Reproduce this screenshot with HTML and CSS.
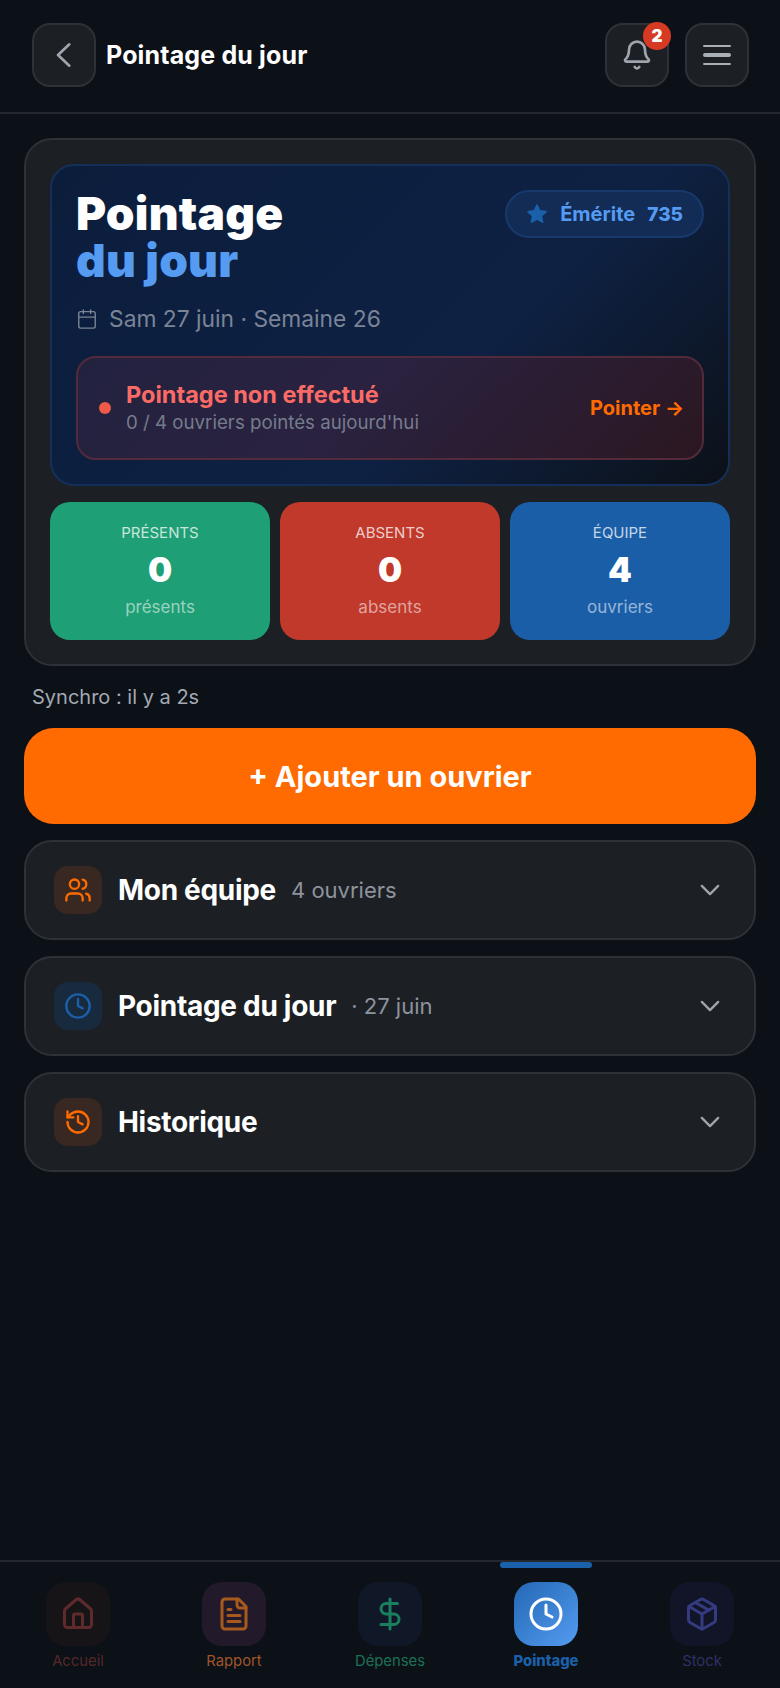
FILE: index.html
```html
<!DOCTYPE html>
<html lang="fr">
<head>
<meta charset="utf-8">
<title>Pointage du jour</title>
<link rel="stylesheet" href="styles.css">
</head>
<body>
<header class="topbar">
  <button class="icon-btn"><svg class="i32" viewBox="0 0 24 24"><path d="M16 4l-8.500 8 8.500 8"/></svg></button>
  <h1 class="top-title">Pointage du jour</h1>
  <div class="top-actions">
    <button class="icon-btn bell">
      <svg class="i32" viewBox="0 0 24 24"><path d="M10.300 21a1.900 1.900 0 0 0 3.400 0"/><path d="M3.300 15.300A1 1 0 0 0 4 17h16a1 1 0 0 0 .7-1.700C19.400 14 18 12.500 18 8A6 6 0 0 0 6 8c0 4.500-1.400 6-2.700 7.300"/></svg>
      <span class="badge">2</span>
    </button>
    <button class="icon-btn menu"><span class="bar"></span><span class="bar thick"></span><span class="bar"></span></button>
  </div>
</header>

<main class="content">
  <section class="summary">
    <div class="hero">
      <div class="hero-top">
        <h2 class="hero-title">Pointage<br><span class="accent">du jour</span></h2>
        <div class="rank"><svg class="star" viewBox="0 0 24 24"><path d="M12 2.500l2.900 6.200 6.700.8-5 4.600 1.400 6.700-6-3.400-6 3.400 1.400-6.700-5-4.600 6.700-.8z"/></svg><span>Émérite</span><span class="rank-num">735</span></div>
      </div>
      <div class="date"><svg class="i22 thin" viewBox="0 0 24 24"><path d="M8 2v4M16 2v4"/><rect x="3" y="4" width="18" height="18" rx="2"/><path d="M3 10h18"/></svg><span>Sam 27 juin · Semaine 26</span></div>
      <div class="alert">
        <span class="dot"></span>
        <div class="alert-text">
          <div class="alert-title">Pointage non effectué</div>
          <div class="alert-sub">0 / 4 ouvriers pointés aujourd'hui</div>
        </div>
        <span class="alert-link">Pointer →</span>
      </div>
    </div>
    <div class="stats">
      <div class="stat green"><div class="stat-label">PRÉSENTS</div><div class="stat-value">0</div><div class="stat-sub">présents</div></div>
      <div class="stat red"><div class="stat-label">ABSENTS</div><div class="stat-value">0</div><div class="stat-sub">absents</div></div>
      <div class="stat blue"><div class="stat-label">ÉQUIPE</div><div class="stat-value">4</div><div class="stat-sub">ouvriers</div></div>
    </div>
  </section>

  <p class="sync">Synchro : il y a 2s</p>
  <button class="add-btn">+ Ajouter un ouvrier</button>

  <div class="accordion">
    <div class="acc-icon orange-soft"><svg class="i28 orange" viewBox="0 0 24 24"><circle cx="9" cy="7" r="4"/><path d="M2 21v-2a4 4 0 0 1 4-4h6a4 4 0 0 1 4 4v2"/><path d="M16 3.100a4 4 0 0 1 0 7.800"/><path d="M22 21v-2a4 4 0 0 0-3-3.900"/></svg></div>
    <span class="acc-title">Mon équipe</span><span class="acc-note">4 ouvriers</span>
    <svg class="chev" viewBox="0 0 24 24"><path d="M5 8.500l7 7 7-7"/></svg>
  </div>
  <div class="accordion">
    <div class="acc-icon blue-soft"><svg class="i28 blue-ink" viewBox="0 0 24 24"><circle cx="12" cy="12" r="10"/><path d="M12 6v6l4 2"/></svg></div>
    <span class="acc-title">Pointage du jour</span><span class="acc-note">· 27 juin</span>
    <svg class="chev" viewBox="0 0 24 24"><path d="M5 8.500l7 7 7-7"/></svg>
  </div>
  <div class="accordion">
    <div class="acc-icon orange-soft"><svg class="i28 orange" viewBox="0 0 24 24"><path d="M3 12a9 9 0 1 0 9-9 9.750 9.750 0 0 0-6.740 2.740L3 8"/><path d="M3 3v5h5"/><path d="M12 7v5l4 2"/></svg></div>
    <span class="acc-title">Historique</span>
    <svg class="chev" viewBox="0 0 24 24"><path d="M5 8.500l7 7 7-7"/></svg>
  </div>
</main>

<nav class="tabbar">
  <span class="tab-indicator"></span>
  <div class="tab">
    <div class="tab-icon t-home"><svg class="i36" viewBox="0 0 24 24"><path d="M15 21v-8a1 1 0 0 0-1-1h-4a1 1 0 0 0-1 1v8"/><path d="M3 10a2 2 0 0 1 .7-1.500l7-6a2 2 0 0 1 2.600 0l7 6a2 2 0 0 1 .7 1.500v9a2 2 0 0 1-2 2H5a2 2 0 0 1-2-2z"/></svg></div>
    <span class="tab-label l-home">Accueil</span>
  </div>
  <div class="tab">
    <div class="tab-icon t-report"><svg class="i36" viewBox="0 0 24 24"><path d="M15 2H6a2 2 0 0 0-2 2v16a2 2 0 0 0 2 2h12a2 2 0 0 0 2-2V7z"/><path d="M14 2v4a2 2 0 0 0 2 2h4"/><path d="M10 9H8M16 13H8M16 17H8"/></svg></div>
    <span class="tab-label l-report">Rapport</span>
  </div>
  <div class="tab">
    <div class="tab-icon t-money"><svg class="i36" viewBox="0 0 24 24"><path d="M12 2v20"/><path d="M17 5H9.500a3.500 3.500 0 0 0 0 7h5a3.500 3.500 0 0 1 0 7H6"/></svg></div>
    <span class="tab-label l-money">Dépenses</span>
  </div>
  <div class="tab">
    <div class="tab-icon t-clock"><svg class="i36" viewBox="0 0 24 24"><circle cx="12" cy="12" r="10"/><path d="M12 6v6l4 2"/></svg></div>
    <span class="tab-label l-clock">Pointage</span>
  </div>
  <div class="tab">
    <div class="tab-icon t-stock"><svg class="i36" viewBox="0 0 24 24"><path d="M11 21.700a2 2 0 0 0 2 0l7-4A2 2 0 0 0 21 16V8a2 2 0 0 0-1-1.700l-7-4a2 2 0 0 0-2 0l-7 4A2 2 0 0 0 3 8v8a2 2 0 0 0 1 1.700z"/><path d="M12 22V12"/><path d="M3.300 7L12 12l8.700-5"/><path d="M7.500 4.300l9 5.100"/></svg></div>
    <span class="tab-label l-stock">Stock</span>
  </div>
</nav>
</body>
</html>
```

FILE: styles.css
```css
* { box-sizing: border-box; }
html, body { margin: 0; padding: 0; }
body {
  width: 780px;
  height: 1688px;
  display: flex;
  flex-direction: column;
  background: #0c1017;
  color: #fff;
  font-family: "Inter", "Liberation Sans", sans-serif;
  overflow: hidden;
}
svg { fill: none; stroke: currentColor; stroke-width: 2; stroke-linecap: round; stroke-linejoin: round; flex: none; }
button { font: inherit; color: inherit; cursor: pointer; }
h1, h2, p { margin: 0; }

.i22 { width: 22px; height: 22px; }
.i28 { width: 28px; height: 28px; }
.i32 { width: 32px; height: 32px; }
.i36 { width: 36px; height: 36px; }
.thin { stroke-width: 1.500; }

.topbar {
  height: 114px;
  flex: none;
  display: flex;
  align-items: center;
  padding: 0 31px 2px 32px;
  border-bottom: 2px solid #25282e;
}
.top-title { margin-left: 10px; font-size: 25px; font-weight: 700; letter-spacing: 0.15px; }
.top-actions { margin-left: auto; display: flex; gap: 16px; }
.icon-btn {
  position: relative;
  width: 64px;
  height: 64px;
  display: flex;
  flex-direction: column;
  align-items: center;
  justify-content: center;
  padding: 0;
  border: 2px solid #2e3137;
  border-radius: 18px;
  background: #1c1f24;
  color: #9fa5ae;
}
.badge {
  position: absolute;
  top: -3px;
  right: -4px;
  width: 28px;
  height: 28px;
  border-radius: 50%;
  background: #d63a22;
  color: #fff;
  font-size: 17px;
  font-weight: 900;
  line-height: 28px;
  text-align: center;
}
.menu { gap: 6px; }
.bar { width: 28px; height: 2px; border-radius: 2px; background: #a9afb6; }
.bar.thick { height: 4px; }

.content { flex: 1; padding: 24px 24px 0; display: flex; flex-direction: column; }

.summary {
  height: 528px;
  padding: 24px 24px 0;
  border: 2px solid #2e3137;
  border-radius: 28px;
  background: #1c1f24;
}
.hero {
  height: 322px;
  padding: 24px 24px 0;
  border: 2px solid #14305a;
  border-radius: 24px;
  background: linear-gradient(135deg, #0c1d3c 0%, #0e2143 62%, #0c1118 100%);
}
.hero-top { display: flex; justify-content: space-between; align-items: flex-start; }
.hero-title { font-size: 46px; line-height: 47px; font-weight: 900; letter-spacing: 0.2px; }
.accent { color: #559bf1; }
.rank {
  height: 48px;
  display: flex;
  align-items: center;
  gap: 12px;
  padding: 0 19px;
  border: 2px solid #17396b;
  border-radius: 24px;
  background: #122c56;
  color: #559bf1;
  font-size: 20px;
  font-weight: 700;
}
.star { width: 22px; height: 22px; color: #1b60aa; fill: #1b60aa; }
.rank-num { font-size: 19px; font-weight: 800; }
.date {
  margin-top: 21px;
  display: flex;
  align-items: center;
  gap: 11px;
  color: #7a8496;
  font-size: 22.800px;
}
.alert {
  margin-top: 24px;
  height: 104px;
  display: flex;
  align-items: center;
  padding: 0 18px 0 21px;
  border: 2px solid #522a3a;
  border-radius: 20px;
  background: linear-gradient(135deg, #22223f 0%, #2a2240 45%, #2b1721 100%);
}
.dot { width: 12px; height: 12px; border-radius: 50%; background: #ec5a48; flex: none; }
.alert-text { margin-left: 15px; flex: 1; }
.alert-title { color: #fb6b66; font-size: 23.500px; line-height: 28px; font-weight: 700; }
.alert-sub { margin-top: 2px; color: #757c8c; font-size: 18.700px; line-height: 24px; }
.alert-link { color: #ff6b00; font-size: 20px; font-weight: 700; }

.stats { margin-top: 16px; display: grid; grid-template-columns: repeat(3, 1fr); gap: 10px; }
.stat {
  height: 138px;
  padding-top: 21px;
  border-radius: 20px;
  text-align: center;
}
.green { background: #1f9f75; }
.red { background: #c0392b; }
.blue { background: #1b5ea8; }
.stat-label { color: rgba(255,255,255,.75); font-size: 15px; line-height: 20px; }
.stat-value { margin-top: 5px; font-size: 34px; line-height: 44px; font-weight: 900; }
.stat-sub { margin-top: 3px; color: rgba(255,255,255,.55); font-size: 17px; line-height: 24px; }

.sync { margin: 19px 0 0 8px; height: 25px; color: #a3a9b2; font-size: 20px; line-height: 25px; }

.add-btn {
  margin-top: 18px;
  height: 96px;
  flex: none;
  border: 0;
  border-radius: 30px;
  background: #ff6b00;
  color: #fff;
  font-size: 29px;
  font-weight: 700;
}

.accordion {
  margin-top: 16px;
  height: 100px;
  flex: none;
  display: flex;
  align-items: center;
  padding: 0 30px 0 28px;
  border: 2px solid #2e3137;
  border-radius: 28px;
  background: #1c1f24;
}
.acc-icon { width: 48px; height: 48px; display: flex; align-items: center; justify-content: center; border-radius: 14px; flex: none; }
.orange-soft { background: #392822; }
.blue-soft { background: #182a3e; }
.orange { color: #ff6b00; }
.blue-ink { color: #1b60aa; }
.acc-title { margin-left: 16px; font-size: 28px; font-weight: 700; letter-spacing: -0.3px; }
.acc-note { margin-left: 15px; color: #8d939c; font-size: 22px; }
.chev { margin-left: auto; width: 28px; height: 28px; color: #9fa5ae; }

.tabbar {
  position: relative;
  height: 128px;
  flex: none;
  display: grid;
  grid-template-columns: repeat(5, 156px);
  justify-content: center;
  padding-top: 20px;
  border-top: 2px solid #25282e;
}
.tab-indicator { position: absolute; top: 0; left: 500px; width: 92px; height: 6px; border-radius: 3px; background: #1b60aa; }
.tab { display: flex; flex-direction: column; align-items: center; }
.tab-icon { width: 64px; height: 64px; border-radius: 20px; display: flex; align-items: center; justify-content: center; }
.tab-label { margin-top: 5px; font-size: 14.800px; line-height: 20px; }
.t-home { background: #171418; color: #5e2a2c; }
.t-report { background: #221a2a; color: #a85a1e; }
.t-money { background: #101828; color: #1a7f5f; }
.t-clock { background: linear-gradient(135deg, #2268b4, #559bf1); color: #fff; }
.t-stock { background: #121527; color: #343b80; }
.l-home { color: #57282a; }
.l-report { color: #a0552a; }
.l-money { color: #1d7058; }
.l-clock { color: #1b60aa; font-weight: 800; }
.l-stock { color: #2c3268; }
```
